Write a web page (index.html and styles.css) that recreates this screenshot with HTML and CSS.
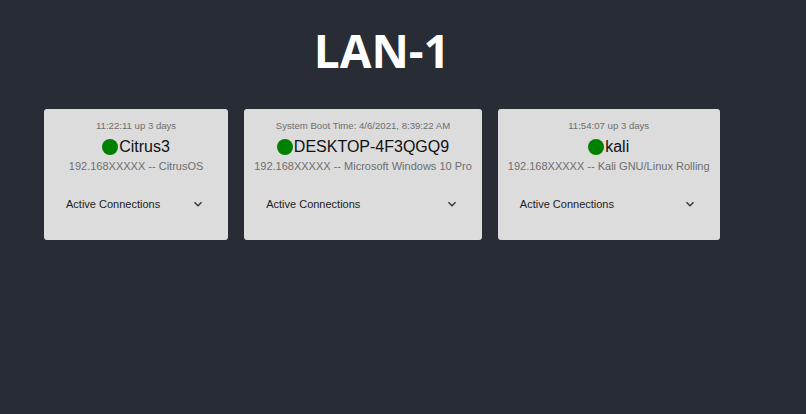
FILE: index.html
```html
<!DOCTYPE html>
<html lang="en">
<head>
  <meta charset="UTF-8" />
  <meta name="viewport" content="width=device-width, initial-scale=1.0"/>
  <title>LAN-1</title>
  <link rel="stylesheet" href="styles.css">
</head>
<body>

  <div class="lan">
    <h1 class="lan-title">LAN-1</h1>

    <div class="hosts">

      <div class="host">
        <div class="host-uptime">11:22:11 up 3 days</div>
        <div class="host-name"><span class="status online"></span>Citrus3</div>
        <div class="host-info">192.168XXXXX -- CitrusOS</div>
        <div class="connections">
          <span>Active Connections</span>
          <svg class="expand-icon" viewBox="0 0 24 24"><path d="M16.59 8.59L12 13.17 7.41 8.59 6 10l6 6 6-6z"/></svg>
        </div>
      </div>

      <div class="host">
        <div class="host-uptime">System Boot Time: 4/6/2021, 8:39:22 AM</div>
        <div class="host-name"><span class="status online"></span>DESKTOP-4F3QGQ9</div>
        <div class="host-info">192.168XXXXX -- Microsoft Windows 10 Pro</div>
        <div class="connections">
          <span>Active Connections</span>
          <svg class="expand-icon" viewBox="0 0 24 24"><path d="M16.59 8.59L12 13.17 7.41 8.59 6 10l6 6 6-6z"/></svg>
        </div>
      </div>

      <div class="host">
        <div class="host-uptime">11:54:07 up 3 days</div>
        <div class="host-name"><span class="status online"></span>kali</div>
        <div class="host-info">192.168XXXXX -- Kali GNU/Linux Rolling</div>
        <div class="connections">
          <span>Active Connections</span>
          <svg class="expand-icon" viewBox="0 0 24 24"><path d="M16.59 8.59L12 13.17 7.41 8.59 6 10l6 6 6-6z"/></svg>
        </div>
      </div>

    </div>
  </div>

</body>
</html>
```

FILE: styles.css
```css
* {
  box-sizing: border-box;
  margin: 0;
  padding: 0;
}

body {
  background-color: #282c34;
  font-family: 'Liberation Sans', Arial, sans-serif;
  height: 100vh;
}

.lan {
  width: fit-content;
  margin-left: 44px;
}

.lan-title {
  font-family: 'Open Sans', sans-serif;
  font-weight: 700;
  font-size: 46px;
  line-height: 60px;
  color: #fff;
  text-align: center;
  padding-top: 20px;
  margin-bottom: 29px;
}

.hosts {
  display: flex;
  align-items: flex-start;
  gap: 16px;
}

.host {
  background-color: #dcdcdc;
  border-radius: 3px;
  padding: 10px 10px 12px;
  text-align: center;
}

.host-uptime {
  font-size: 9.6px;
  line-height: 14px;
  color: #6e6e6e;
}

.host-name {
  margin-top: 4px;
  font-size: 16px;
  line-height: 20px;
  color: #111;
  display: flex;
  justify-content: center;
  align-items: center;
}

.status {
  display: inline-block;
  width: 16px;
  height: 16px;
  border-radius: 50%;
  margin-right: 1px;
}

.online {
  background-color: #008000;
}

.host-info {
  margin-top: 2px;
  font-size: 11px;
  line-height: 14px;
  color: #6e6e6e;
  white-space: nowrap;
}

.connections {
  margin-top: 7px;
  height: 48px;
  padding: 0 12px;
  display: flex;
  justify-content: space-between;
  align-items: center;
  gap: 30px;
  font-size: 11px;
  color: #222;
  cursor: pointer;
}

.expand-icon {
  width: 16px;
  height: 16px;
  fill: #333;
}
```
